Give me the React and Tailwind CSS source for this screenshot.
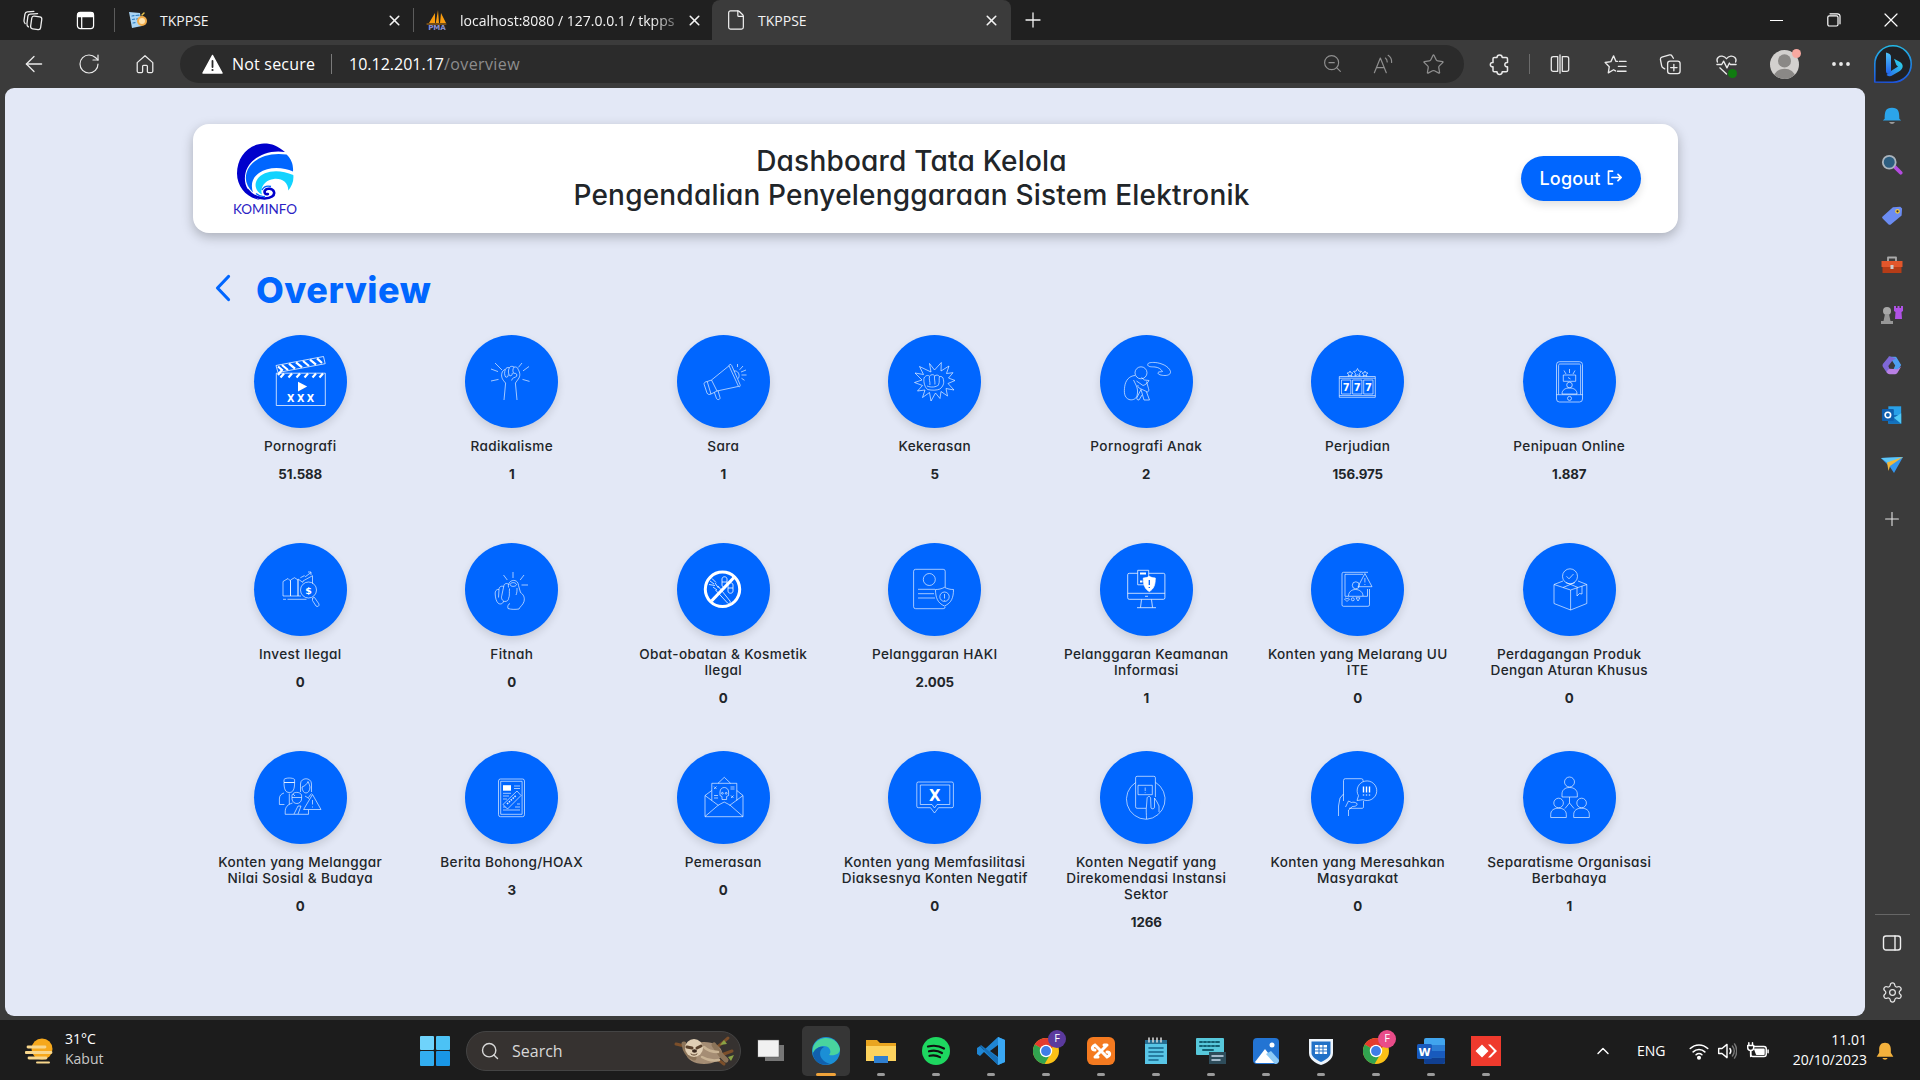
import React from "react";
import { ArrowLeft, RotateCw, Star, X, Plus, ZoomOut, Ellipsis, ChevronUp, Settings, Search, File } from "lucide-react";

const bold = "font-['DejaVu_Sans'] font-bold";

/* Category icons, each drawn in a 93x93 box, the size of its circle. */
const icons = {
  clapper: (
    <g strokeOpacity="1">
      <path d="M22.3 38.2h49v32.3h-49z" />
      <path d="M22 30.5 69.5 21.5l1.7 7.2L24 37.5z" />
      <path d="M28 30l6 5M35 28.6l6 5M42 27.3l6 5M49 26l6 5M56 24.7l6 5M63 23.4l5 4.6" strokeWidth="2.2" />
      <path d="M30 38.5l-3.5 4M38 38.5l-3.5 4M46 38.5l-3.5 4M54 38.5l-3.5 4M62 38.5l-3.5 4M69 38.5l-3.5 4M24 31.5l4 3.5-4 5" strokeWidth="2.2" />
      <path d="M44 46.8v9.600l9.200-4.800z" fill="#fff" stroke="none" />
      <text x="47.8" y="67" textAnchor="middle" fontSize="9.600" letterSpacing="2.4" fill="#fff" stroke="none" className={bold}>XXX</text>
    </g>
  ),
  fist: (
    <g>
      <path d="M30 28l7 7M26 34l7 2.6M26 46l7.5-1.6M57 28l-3.6 4.4M64 31.5l-6 4.4M57.5 44.4l7 2" />
      <path d="M40.6 48L39 65M50.4 48L52 65" />
      <path d="M40.6 48c-3-3-4.6-6-3.8-9.500.5-2.400 2-3.800 3.500-4 .8-1.800 2.600-2.400 4-1.800 1-1.600 3.400-1.800 4.700-.6 2-.6 4 .6 4.300 2.600 1.800 3 2.200 6.500 0 9.300-.9 1.500-2 2.700-2.900 4" />
      <path d="M40.300 34.500c-1 3-1 5.500.4 7.500 1.600.8 2.700-.7 2.500-2.500M44.300 32.700c-1.300 3-1.200 6 .4 8 2 .6 2.600-1 2.600-2.600M49 32.100c-1.500 2-1.300 4.500-.4 6.200 2.600-.4 3.800 1 3 3-1.600 1.600-4.500 1-5 4.200" />
    </g>
  ),
  megaphone: (
    <g>
      <path d="M34.500 45L52 30.800l9.500 20.600L40 56z" />
      <path d="M52 30.800c.3-1.800 2-1.900 2.700-.3l8.300 19c.6 1.800-.3 2.700-1.500 1.900M34.500 45l-4.300 1.500L34 59l6-3M30.200 46.500c-2 .2-3.600 1.300-3 3l2.800 8.500c.7 1.700 2.700 1.800 4 1M37.300 57.300l2.200 6.200c1 1.800 4 1.200 3.500-1l-2-6.800M57 36c3.600-.6 6.500 3 4.400 7.500" />
      <path d="M60.500 29v3M66 31l-3.400 3.800M69 35l-5 2M69.500 40h-5M67.500 45.300l-3-2" />
    </g>
  ),
  punch: (
    <g>
      <path d="M43 37l-1.500-8.500 5 6.500 6.800-7.500-.3 8.500 8-5-2.500 7.500 6.500-.8-4.500 5.300 6.500 2.500-7 3 6 6.500-8-1.500 1.500 7.500-6.500-4.500-1 7-4.500-5.500-4.500 8-1.500-8.500-7 5 2.500-7.500-7.500 1 5-5.500-8-3 7.500-2.500-7-7 8.500 1.500-4-8z" />
      <path d="M36 43c2-3 4-3 5.500-1.800 1.500-2 4-2 5.200-.4 1.600-1.200 4-.8 4.700.8 2-.6 4 .6 4 3 1 4-.5 7-3.500 9.400-3 1.500-8 1.400-12 .6-3-1.600-4.600-7.600-3.900-11.600zM41.500 41.500c-.8 3 .8 5 .4 8.500M46.700 41c-.8 3 .6 5 .2 8.500M51.400 41.700c-.6 3 .4 5-.8 7.800M39 51c4 1.600 9 1.500 12-1.500" />
    </g>
  ),
  child: (
    <g>
      <circle cx="41" cy="37.800" r="6" />
      <path d="M35 40.500c-6 .5-9.500 5-10.300 11-.7 5.500-.7 11 4.300 13 3 1 7-.3 8-3.500 1-4 .8-8-1.500-12l-2-4M36.500 46l6.500 4.500c2.500-.5 5-3 6-5l-4.500-.5-3-2.500M46.500 46.500l2 7c.8 2 0 3-1 3.500l-7.500-3.500c-2-1-2.500-2-2-3.500M41 54.500l3 10.500h5.500l-3-8M41 54.500l-4 8c-.6 1.800.5 2.600 2 2.500l3-5" />
      <path d="M47.700 29.500c0-2 4-2.200 7.500-2 3.500.3 6 1.200 9 2.500 2.500 1.200 5.800 4 6.300 6.500.4 2.500-2 4-5.500 4-3.500 0-7.500-1-7-2.800.7-1.500 3-.5 4.500-1.200-2-3-4-4-7.500-4.500-3-.3-7.300.3-7.300-2.500z" />
    </g>
  ),
  slot: (
    <g>
      <path d="M28.300 41.500h36v20.800h-36zM28.300 43.200h36M28.300 60.600h36M30.500 45h9.300v14h-9.300zM41.600 45h9.300v14h-9.300zM52.700 45h9.300v14h-9.300z" />
      <path d="M46.500 33.500l1.300 2.600 2.700.3-2 2 .6 2.600-2.600-1.300-2.600 1.300.6-2.600-2-2 2.700-.3zM39 36l.9 1.800 2 .2-1.500 1.400.5 1.800-1.900-.8-1.900.8.5-1.800-1.500-1.400 2-.2zM54 36l.9 1.800 2 .2-1.500 1.400.5 1.800-1.900-.8-1.900.8.5-1.800-1.500-1.400 2-.2z" />
      <g fontSize="10" fill="#fff" stroke="none" textAnchor="middle" className={bold}>
        <text x="35.200" y="55.800">7</text><text x="46.300" y="55.800">7</text><text x="57.400" y="55.800">7</text>
      </g>
    </g>
  ),
  phone: (
    <g>
      <rect x="33.500" y="26.700" width="26" height="40.300" rx="3" />
      <path d="M35.600 59.500V30.500c0-1 .5-1.500 1.500-1.500h19c1 0 1.500.5 1.500 1.500v29M33.500 59.700h26M40.300 40h12.400v6.300H40.300zM46.500 34v4M41 35.500l2 3.500M52 35.500l-2 3.500M39 59c0-4 3-6 7.500-6s7.500 2 7.500 6zM45 42.500l2.500 1.500" />
      <circle cx="46.500" cy="63.400" r="2" /><circle cx="46.500" cy="50" r="2.800" />
    </g>
  ),
  invest: (
    <g>
      <path d="M29 53V38.500l5-3 2.500 2.500v15M36.500 53V37l4-2.300 3.500 2.300v16M44 53V36l5 3.500M29 53h18M29 56.300h3M33.500 56.300h19M46.400 34.700l4-2 1 1L57 29.500M54 29h3v3M49 39v-1l9.500-5.300v8" />
      <circle cx="54.500" cy="47" r="8" />
      <path d="M58.500 55l2-.5 4.500 6.500c.6 2-1.600 3.300-3 2l-3.500-5.500z" />
      <text x="54.500" y="50.500" fontSize="9.500" textAnchor="middle" fill="#fff" stroke="none" className={bold}>$</text>
    </g>
  ),
  pointing: (
    <g>
      <path d="M48 29v6M38.500 32l3.800 5M59 32l-3.800 5M56.500 42H63" />
      <path d="M43.500 44.500c-1.500-8 9.500-10 10-2l2 7c3 2 4.500 5 3.500 9-1 3.500-4 5-5 7.500-4 .6-8 .5-11-.5-.8-2 .3-4.500 2-5M44.500 45.500c-.5 4 .5 7-1 10M45 41.500c1-2.500 5.500-2.500 6.500 0-.5 2.500-6 2.500-6.500 0zM52 45c0 2.500 0 5-1 7M43.800 41.500c-2.500-2-4.800-.6-5 1.500l-2 9.500M38.500 43.500c-2.500-1-4.500.5-4.500 3l-.5 8M34 46.500c-2.500-.5-4 1.500-3.800 4.500.2 4 1 7.500 3.300 9.500 2.500 1.300 5-.4 5-2.500M36.800 52.500c-1 3 .6 5.500 3 6 2.500 0 3.700-1.500 3.700-3" />
    </g>
  ),
  noDrugs: (
    <g strokeOpacity="1">
      <path d="M33 38l4 3M35 35.500l4 4M32 41.500l6 1M38 40l3.500 5M36 44l4 3M41 43l12 15c1 2-1 3.500-2.500 2l-12-13M45 36c0-3 5-3 5 0v6c0 3-5 3-5 0zM51 42c0-3 5-3 5 0v6c0 3-5 3-5 0zM45 39h5M51 45h5" strokeWidth=".8" />
      <circle cx="45.500" cy="46.300" r="17.200" strokeWidth="3" />
      <path d="M34.500 58L57 34.500" strokeWidth="3.200" />
    </g>
  ),
  haki: (
    <g>
      <path d="M50 65.700H27.600a2 2 0 0 1-2-2V28.300a2 2 0 0 1 2-2h27.600a2 2 0 0 1 2 2v16M50 65.700h5.200a2 2 0 0 0 2-2" />
      <circle cx="41.300" cy="36.500" r="6" />
      <path d="M30 46.300h17M30 50.700h16M30 55h17M56.500 44.300c3 1.700 6 2.200 9 2.200 0 8-2 13.500-9 16.500-7-3-9-8.500-9-16.500 3 0 6-.5 9-2.200zM56.500 51v4.500M56.500 57v.8" />
      <circle cx="56.500" cy="53.700" r="4.700" />
    </g>
  ),
  monitor: (
    <g strokeOpacity="1">
      <rect x="27.700" y="30.300" width="37.200" height="26" rx="1.500" />
      <path d="M27.700 50.300h37.200M41.500 56.500l-1 8M51.500 56.500l1 8M37 64.700h19M45 53.300h3" />
      <path d="M37.700 27.300h11v14.500h-11z" fill="#06f" />
      <path d="M40 30.500h6M40 38.500h2.500" strokeWidth="2" />
      <path d="M49.300 33.300c2 1.300 4 1.700 6 1.700 0 7-1.500 10.800-6 13.600-4.500-2.800-6-6.600-6-13.600 2 0 4-.4 6-1.700z" fill="#fff" />
      <path d="M49.300 37v5M49.300 44v1" stroke="#06f" strokeWidth="1.300" />
    </g>
  ),
  ite: (
    <g>
      <path d="M58.500 46v15.800a1.500 1.500 0 0 1-1.500 1.500H32.500a1.500 1.500 0 0 1-1.500-1.500v-31a1.500 1.500 0 0 1 1.500-1.500H57M56.500 46v7.300H34V31.300h18M37.500 53c0-4 3-6.500 7-6.500s7.500 2.500 7.500 6.500" />
      <circle cx="44.800" cy="42.300" r="3.500" />
      <path d="M53.900 30.500L61 43.700H47zM53.900 35v4.500M53.900 41v1" />
      <path d="M36 58.500l-2.500-2.500 1.300-1 1.200 1 1.200-1 1.300 1zM45 54.800h4l-2 3.200z" /><circle cx="41.800" cy="56.300" r="1.500" />
    </g>
  ),
  box: (
    <g>
      <circle cx="47" cy="33.300" r="7.500" /><path d="M43.500 33.300l2.500 2.500 4.500-4.800" />
      <path d="M31 41.500v19l16.600 6.500 16.200-6.500v-19L47.600 47zM47.600 47v20M31 41.500l9-3.500M63.800 41.500L55 38M40 44.500l12-5M55 44.500l-12-5M54 45v8l2.500-2.500L59 51v-8" />
    </g>
  ),
  family: (
    <g>
      <path d="M30 31.500c0 7 1.600 10 5.300 10s5.300-3 5.300-10zM30 31.500v-3c1.500-2 9-2 10.600 0v3M30 31.500h10.600M46.500 41v-8c0-7 11-7 11 0v8M48 36c3-1 5-3 6-5.500 1 2 1.500 3.500 2 5.500-.3 8-7.700 8-8 0zM30 42c-3 1-4.600 2.500-4.600 6v5.500h5M35.300 42.500v11M39 43l2 2M57.500 42.500l-3 4" />
      <path d="M38 44c1.500-3.500 8-3.500 9.600 0v4c-.5 6-9 6-9.600 0zM38 46.500h9.600M38.500 52c-5 1.500-7.300 4-7.300 9v2.300h23.300V59M40 63l4-8 3 0-3 8M51 45l4 2.500" />
      <path d="M58.500 43.500L67 58.500H49.600zM58.500 49v4.500M58.500 55.500v1" />
    </g>
  ),
  hoax: (
    <g>
      <rect x="33.500" y="28" width="26" height="37.700" rx="2" /><path d="M35.700 30.300h21.400v33H35.700z" />
      <path d="M38 34.200h8v5.500h-8z" fill="#fff" stroke="none" />
      <path d="M49 35h6M49 37.500h6M38 42.300h8M38 45h6M38 48h4M38 56h4M38 59h17M50 56h5M52 53h3" />
      <path d="M38 53.500L52 40l4 4.500L42.500 58z" fill="#06f" /><path d="M42 53l9-8.600" strokeWidth="1.600" strokeDasharray="1.600 1" />
    </g>
  ),
  envelope: (
    <g>
      <path d="M28 44.500v21.200h38V44.500M28 44.500l13.500 10M66 44.500l-13.500 10M28 65.500L41.500 54l5.700-3 5.700 3L66 65.500M34.800 49.500V32.300h25v17.200M41 32.300l6.300-6 6.300 6M28 44.500l6.800-5M66 44.500l-6.200-5" />
      <path d="M43 41c0-6 8.600-6 8.600 0v3.500l-2 1v3h-4.600v-3l-2-1zM37 35.500l2.500 2.500M39.500 35.500L37 38M53.500 36h4M53.500 38h4M37 44.500h4M37 47h4M54 44.500l2.500 2.500M56.500 44.500L54 47" />
      <circle cx="45.400" cy="42.300" r=".9" /><circle cx="49.200" cy="42.300" r=".9" />
    </g>
  ),
  blocked: (
    <g>
      <path d="M30.300 31h33.600a1.500 1.500 0 0 1 1.500 1.500v22.700a1.500 1.500 0 0 1-1.500 1.500H50.500L46.500 62l-4-5.300H30.300a1.500 1.500 0 0 1-1.500-1.500V32.500a1.500 1.500 0 0 1 1.500-1.500z" />
      <path d="M32.300 34h29.500v19.500H49L46.500 57 44 53.500H32.300z" />
      <text x="46.700" y="49.700" fontSize="15" textAnchor="middle" fill="#fff" stroke="none" className={bold}>X</text>
    </g>
  ),
  sector: (
    <g>
      <path d="M35.600 31.500a20 20 0 0 0 10.900 36.800 20 20 0 0 0 9-37" />
      <path d="M46 57.300h-8.900a1.500 1.500 0 0 1-1.500-1.500v-29a1.500 1.500 0 0 1 1.500-1.500h16.800a1.500 1.500 0 0 1 1.500 1.500V46M38 34.300h14.300v9.400H38zM45.200 36.500v3.500M45.200 41.300v.8" />
      <path d="M46.500 68c0-5-.6-9 0-13l.6-8c.5-2 3.300-2 3.500 0l.4 10c1 1.500 3.500 1 3.500-1V47l2.500 4 2 4v6" />
    </g>
  ),
  unrest: (
    <g>
      <path d="M38 57.300h13c1 0 1.500-.5 1.500-1.500v-6M32.500 50V29.500a1.800 1.800 0 0 1 1.800-1.800h16a1.800 1.800 0 0 1 1.800 1.800v1" />
      <path d="M46 49.500l1.500-4.800a9.800 9.800 0 1 1 4.500 4z" /><path d="M52.500 35.500v6M52.500 43.500v1M55.500 35.500v6M55.500 43.500v1M58.500 35.500v6M58.500 43.500v1" strokeWidth="1.400" strokeOpacity="1" />
      <path d="M27.500 65V55l1.500-8 3.500-4M37.500 65v-6l4-3.500c3 0 5-1 4.500-3-2-1.500-4-1.500-5.500-1l-3-1.500-3 6" />
    </g>
  ),
  group: (
    <g>
      <circle cx="46.500" cy="31" r="5" /><circle cx="35.600" cy="52" r="4.800" /><circle cx="58.600" cy="52" r="4.800" />
      <path d="M39 46v-3c0-4 3-6.500 7.500-6.500s7.800 2.500 7.800 6.500v3zM27.700 66.500v-3c0-4 3-6.300 7.800-6.300s7.800 2.300 7.800 6.300v3zM50.700 66.500v-3c0-4 3-6.300 7.800-6.300s7.800 2.300 7.800 6.300v3zM46.500 46v6l-4.500 5.500M46.500 52l4.500 5.500" />
    </g>
  ),
};

const categories = [
  ["clapper", ["Pornografi"], "51.588"],
  ["fist", ["Radikalisme"], "1"],
  ["megaphone", ["Sara"], "1"],
  ["punch", ["Kekerasan"], "5"],
  ["child", ["Pornografi Anak"], "2"],
  ["slot", ["Perjudian"], "156.975"],
  ["phone", ["Penipuan Online"], "1.887"],
  ["invest", ["Invest Ilegal"], "0"],
  ["pointing", ["Fitnah"], "0"],
  ["noDrugs", ["Obat-obatan & Kosmetik", "Ilegal"], "0"],
  ["haki", ["Pelanggaran HAKI"], "2.005"],
  ["monitor", ["Pelanggaran Keamanan", "Informasi"], "1"],
  ["ite", ["Konten yang Melarang UU", "ITE"], "0"],
  ["box", ["Perdagangan Produk", "Dengan Aturan Khusus"], "0"],
  ["family", ["Konten yang Melanggar", "Nilai Sosial & Budaya"], "0"],
  ["hoax", ["Berita Bohong/HOAX"], "3"],
  ["envelope", ["Pemerasan"], "0"],
  ["blocked", ["Konten yang Memfasilitasi", "Diaksesnya Konten Negatif"], "0"],
  ["sector", ["Konten Negatif yang", "Direkomendasi Instansi", "Sektor"], "1266"],
  ["unrest", ["Konten yang Meresahkan", "Masyarakat"], "0"],
  ["group", ["Separatisme Organisasi", "Berbahaya"], "1"],
];

/* ---------- browser chrome ---------- */

function Svg({ size = 22, box = 24, children, ...rest }) {
  return (
    <svg width={size} height={size} viewBox={`0 0 ${box} ${box}`} fill="none" strokeLinecap="round" strokeLinejoin="round" {...rest}>
      {children}
    </svg>
  );
}

const Close = ({ size = 17 }) => <X size={size} strokeWidth={1.6} absoluteStrokeWidth className="shrink-0" />;

function TabStrip() {
  return (
    <div className="flex h-10 items-center bg-[#202020] text-[14px] text-[#f3f3f3]">
      <div className="flex w-[65px] justify-center">
        <Svg size={22} stroke="#eee" strokeWidth="1.4">
          <rect x="10" y="8" width="11" height="14" rx="2.500" transform="rotate(8 15 15)" />
          <path d="M7 19.500c-1.500-1-1.800-2-1.600-3.500l1-8c.2-1.500 1-2.200 2.500-2.300L17 5M3.500 16C2.300 15 2 14 2.200 12.500l1-7C3.500 4 4.300 3.300 5.800 3.100L13 2.500" />
        </Svg>
      </div>
      <div className="flex w-[49px] justify-start pl-[11px]">
        <Svg size={19} box={20} stroke="#fff" strokeWidth="1.300">
          <rect x="1.500" y="1.500" width="17" height="17" rx="3" /><path d="M2 3.500c0-1 .7-1.700 1.700-1.700h12.600c1 0 1.700.7 1.700 1.700V6H2z" fill="#fff" /><path d="M6 6v12" />
        </Svg>
      </div>
      <div className="h-6 w-px bg-[#5c5c5c]" />
      <div className="flex w-[298px] items-center pl-[13px]">
        <Svg size={20} box={20}>
          <path d="M1 2l11 1 2 13-10 2z" fill="#a9d5f5" /><path d="M4 6l2-.3M4.500 9.500l2-.3M5 13l2-.3M8 5.500l3-.3M8.500 9l2-.3" stroke="#2f7fc1" strokeWidth="1.200" />
          <circle cx="14" cy="11" r="5" fill="#f2ac4a" /><circle cx="14" cy="11" r="3" fill="#ffe2ad" /><path d="M14 5l2-2" stroke="#e8c34a" strokeWidth="1.500" />
        </Svg>
        <span className="ml-3 flex-1">TKPPSE</span>
        <span className="mr-[10px]"><Close /></span>
      </div>
      <div className="h-6 w-px bg-[#5c5c5c]" />
      <div className="flex w-[298px] items-center pl-[12px]">
        <Svg size={22} box={22}>
          <path d="M3 14L9 4v10zM9.800 14L12 1l1 13zM14 14l1-10 5 10z" fill="#f89c0e" /><path d="M1 15h19" stroke="#c77a10" />
          <text x="11" y="21" fontSize="7" textAnchor="middle" fill="#8c93d6" className={bold}>PMA</text>
        </Svg>
        <span className="ml-3 w-[218px] whitespace-nowrap [mask-image:linear-gradient(to_right,#000_88%,rgba(0,0,0,0.3)_100%)]">localhost:8080 / 127.0.0.1 / tkpps</span>
        <span className="ml-[8px]"><Close /></span>
      </div>
      <div className="flex h-10 w-[299px] items-center rounded-t-[8px] bg-[#3b3b3b] pl-[13px]">
        <File size={22} strokeWidth={1.300} />
        <span className="ml-[11px] flex-1">TKPPSE</span>
        <span className="mr-[11px]"><Close /></span>
      </div>
      <div className="flex w-11 justify-center"><Plus size={24} strokeWidth={1.300} /></div>
      <div className="ml-auto flex pr-px">
        <div className="flex w-[58px] items-center justify-center"><div className="h-px w-[13px] bg-white" /></div>
        <div className="flex w-[57px] items-center justify-center">
          <Svg size={14} box={14} stroke="#fff" strokeWidth="1.200"><rect x=".8" y="2.800" width="10.200" height="10.200" rx="1.500" /><path d="M3 .8h7.500A2.500 2.500 0 0 1 13 3.300v7.500" /></Svg>
        </div>
        <div className="flex w-[57px] items-center justify-center"><Svg size={14} box={14} stroke="#fff" strokeWidth="1.200"><path d="M1 1l12 12M13 1L1 13" /></Svg></div>
      </div>
    </div>
  );
}

function Toolbar() {
  const cell = "flex w-[55.5px] shrink-0 items-center justify-center";
  return (
    <div className="flex h-12 items-center pl-[6px] text-[#eaeaea]">
      <div className={cell}><ArrowLeft size={26} strokeWidth={1.200} /></div>
      <div className={cell}><RotateCw size={24} strokeWidth={1.200} /></div>
      <div className={cell}>
        <Svg size={22} stroke="#eaeaea" strokeWidth="1.400"><path d="M3.500 10.500L12 3l8.500 7.500V20c0 .8-.5 1.300-1.300 1.300h-3.400c-.7 0-1.200-.5-1.200-1.200v-5.600c0-.6-.4-1-1-1h-3.200c-.6 0-1 .4-1 1v5.600c0 .7-.5 1.200-1.200 1.200H4.800c-.8 0-1.300-.5-1.300-1.300z" /></Svg>
      </div>
      <div className="ml-[7.5px] flex h-[38px] w-[1284px] shrink-0 items-center rounded-full bg-[#2b2b2b] pl-[22px] text-[16px] text-white">
        <Svg size={21} box={21}><path d="M10.500 1.500L20 19H1z" fill="#fff" stroke="#fff" strokeWidth="1.500" /><path d="M10.500 7v6" stroke="#2b2b2b" strokeWidth="1.800" /><circle cx="10.500" cy="16" r="1.100" fill="#2b2b2b" /></Svg>
        <span className="ml-[9px] w-[84px] whitespace-nowrap tracking-[0.2px]">Not secure</span>
        <div className="mx-[15px] h-5 w-px bg-[#7a7a7a]" />
        <span className="ml-[2px]">10.12.201.17<span className="tracking-[0.4px] text-[#8d8d8d]">/overview</span></span>
        <div className="ml-auto flex pr-[7px] text-[#8f8f8f]">
          <div className="flex w-[51px] justify-center"><ZoomOut size={21} strokeWidth={1.300} /></div>
          <div className="flex w-[51px] justify-center">
            <Svg size={22} stroke="currentColor" strokeWidth="1.300"><path d="M1.500 21.500L8 5.500l6.500 16M4 16h8M13.500 5.500c1.300 1 2 2.500 2 4.300M16.500 2.500c2.500 1.500 4 4.500 3.800 7.800" /></Svg>
          </div>
          <div className="flex w-[48px] justify-center"><Star size={23} strokeWidth={1.300} /></div>
        </div>
      </div>
      <div className="ml-[7px] flex w-[58px] shrink-0 justify-center">
        <Svg size={24} stroke="#eaeaea" strokeWidth="1.500"><path d="M9 5.500a2.600 2.600 0 0 1 5.200 0h4c.8 0 1.300.5 1.300 1.300v3.700a2.200 2.200 0 1 0 0 4.300v3.700c0 .8-.5 1.300-1.300 1.300h-4a2.600 2.600 0 0 1-5.200 0H6.300c-.8 0-1.300-.5-1.300-1.300v-3.700a2.200 2.200 0 1 1 0-4.300V6.800c0-.8.5-1.300 1.300-1.300z" /></Svg>
      </div>
      <div className="h-5 w-px shrink-0 bg-[#6b6b6b]" />
      <div className={cell + " ml-[2px]"}>
        <Svg size={22} stroke="#eaeaea" strokeWidth="1.400"><path d="M9.500 4H4.800C3.500 4 2.500 4.800 2.500 6v12c0 1.200 1 2 2.300 2h4.700zM14.500 4h4.700c1.300 0 2.300.8 2.300 2v12c0 1.200-1 2-2.300 2h-4.700zM12 2v20" /></Svg>
      </div>
      <div className={cell}>
        <Svg size={23} stroke="#eaeaea" strokeWidth="1.400"><path d="M14 8.800h-1.500L10 3 7.200 9l-6 .9 4.300 4.400-1 6.500L10 17.500l2 1.200M16 8.800h7M15 14h8M14 19h9" /></Svg>
      </div>
      <div className={cell}>
        <Svg size={23} stroke="#eaeaea" strokeWidth="1.400"><rect x="9" y="8.500" width="13" height="13" rx="2.500" /><path d="M15.500 12v6.500M12.200 15.200h6.600M6 16.500l-1.700-.9c-1-.5-1.300-1.200-1.500-2.200L1.500 6.800c-.2-1.300.3-2 1.500-2.400L11 2c1.200-.3 2 0 2.500 1L15 5.500" /></Svg>
      </div>
      <div className={cell}>
        <div className="relative">
          <Svg size={23} stroke="#eaeaea" strokeWidth="1.400"><path d="M2.500 9.500C.8 5 4.500 3 7.500 3.300 9.500 3.500 11 4.500 12 6c1-1.500 2.500-2.500 4.500-2.700 3-.3 6.700 2.200 5 6.200M2 12h5l2-3.500 3.500 7 2.500-5 1 1.500h6M5 15.500l7 6.500" /></Svg>
          <span className="absolute -bottom-[2px] right-[1px] size-[9px] rounded-full bg-[#107c10]" />
        </div>
      </div>
      <div className="flex w-[60px] shrink-0 justify-center">
        <div className="relative">
          <Svg size={29} box={28}><clipPath id="avatar"><circle cx="14" cy="14" r="14" /></clipPath><g clipPath="url(#avatar)"><path d="M0 0h28v28H0z" fill="#d2d0ce" /><circle cx="14" cy="10.500" r="6.300" fill="#8a8886" /><ellipse cx="14" cy="25.500" rx="10" ry="7.500" fill="#8a8886" /></g></Svg>
          <span className="absolute -right-[2px] -top-[1px] size-[9px] rounded-full bg-[#f7a8a0]" />
        </div>
      </div>
      <div className="flex w-[54px] shrink-0 justify-center"><Ellipsis size={24} strokeWidth={1.800} /></div>
      <div className="ml-[5px] flex w-[40px] shrink-0 justify-center">
        <Svg size={40} box={40}>
          <defs>
            <linearGradient id="bingRing" x1="0" y1="0" x2="0" y2="1"><stop offset="0" stopColor="#23b8e6" /><stop offset="1" stopColor="#1c55e0" /></linearGradient>
            <linearGradient id="bingB" x1="0" y1="0" x2="0" y2="1"><stop offset="0" stopColor="#4fc3f7" /><stop offset="1" stopColor="#1f63ee" /></linearGradient>
            <linearGradient id="bingC" x1="1" y1="0" x2="0" y2="1"><stop offset="0" stopColor="#2fdfe4" /><stop offset="1" stopColor="#2667ee" /></linearGradient>
          </defs>
          <path d="M1.800 38V20A18.200 18.200 0 1 1 20 38.200z" fill="#202124" stroke="url(#bingRing)" strokeWidth="1.600" />
          <path d="M13.500 31c2 1.500 4 1.500 6 .3l6.500-3.800c4.500-2.500 5-7 1-9.500l-6-3.200 2.300 6.200 1.700 1.500-7 4.500z" fill="url(#bingC)" />
          <path d="M13 8.500c3 .8 5 2 5 4.500V27c0 3.500-5 4-5 0z" fill="url(#bingB)" />
        </Svg>
      </div>
    </div>
  );
}

const sideIcons = [
  <Svg><path d="M4 16c0-8 1-12 8-12s8 4 8 12l2 2H2z" fill="#2ba4ea" /><path d="M9 20h6c0 2-6 2-6 0z" fill="#bbb" /></Svg>,
  <Svg><path d="M15 14l6.500 6.500" stroke="#b44be0" strokeWidth="4" /><circle cx="9" cy="9" r="7" fill="#2d5e80" stroke="#aab4bd" strokeWidth="2" /></Svg>,
  <Svg><path d="M1.500 14L13 3.500l8-.5 2 2-.5 7.500L11 22c-1 1-2 1-3 0l-6-6c-.8-.8-1-1.300-.5-2z" fill="#6b8cf2" /><circle cx="18" cy="8" r="2.500" fill="#f3c73c" /><circle cx="18" cy="8" r="1.200" fill="#333" /></Svg>,
  <Svg size={24}><path d="M8 8V4.500h8V8" stroke="#aaa" strokeWidth="1.800" /><path d="M1.500 8h21v6h-21z" fill="#e2562b" /><path d="M2.500 14h19v6h-19z" fill="#b53c17" /><path d="M10.500 12h3v4h-3z" fill="#ccc" /></Svg>,
  <Svg size={24}><path d="M14 3h2v2h1.500V3h2v2H21V3h2v5l-1.500 1 .5 7h-7l.5-7-1.500-1z" fill="#b052e6" /><circle cx="7" cy="8" r="4" fill="#a8a8a8" /><path d="M5 11h4l1.500 7H13v3H1v-3h2.500z" fill="#979797" /></Svg>,
  <Svg><path d="M8 3h7c1 0 2 .5 2.500 1.500L22 12l-3 5-6 1 2.500-5.500L12 7z" fill="#4e9ff0" /><path d="M9 2.500L2 11c-.5 1-.5 2 0 3l4 6 5 1-3-8 4.500-6 4-2z" fill="#7f68d8" /><path d="M6 20c1 1.500 2 2 3.500 2h6c1 0 2-.5 2.500-1.500l4-7-4 3-9-.5-2 2z" fill="#b980e4" /></Svg>,
  <Svg><path d="M8 2.500h14v19H8z" fill="#28a0e8" /><path d="M8 12h14v9.500H8z" fill="#1270bd" /><path d="M14 15l8-5v11.500z" fill="#50c8f4" /><rect x="1" y="5.500" width="13" height="13" rx="1" fill="#0f5fae" /><circle cx="7.500" cy="12" r="3" stroke="#fff" strokeWidth="1.800" /></Svg>,
  <Svg size={24}><path d="M1 5l22-1-9 16-4-6z" fill="#3396ef" /><path d="M1 5l22-1-14 7z" fill="#5ec7f7" /><path d="M7 9.500L23 4 10 13l-1.500 5z" fill="#f1b83a" /></Svg>,
];

function Sidebar() {
  return (
    <div className="flex w-[54px] flex-col items-center pt-[2px] text-[#e4e4e4]">
      {sideIcons.map((icon, i) => <div key={i} className="flex h-[50px] items-center">{icon}</div>)}
      <div className="flex h-[58px] items-center"><Plus size={22} strokeWidth={1.200} /></div>
      <div className="mt-auto h-px w-[35px] bg-[#666]" />
      <div className="flex h-[55px] items-center">
        <Svg size={20} box={20} stroke="#eee" strokeWidth="1.400"><rect x="1.500" y="3" width="17" height="14" rx="2.500" /><path d="M13 3v14" /></Svg>
      </div>
      <div className="mb-[1px] flex h-[45px] items-center"><Settings size={23} strokeWidth={1.300} /></div>
    </div>
  );
}

/* ---------- dashboard ---------- */

function Logo() {
  return (
    <svg width="66" height="74" viewBox="0 0 66 74" className="shrink-0">
      <path d="M53 10C46 4 40 1.500 32 1.500 16 2 5 15 5 31.500 5 45 15 56 28 58 16 52 11 42 13.500 31 17 17 34 7 53 10z" fill="#0000cc" />
      <path d="M54.500 12.500C59.500 17 61.500 23 61 29.500 51 25 36 24.500 27 31c-7 5-8.500 12-6 19.500-6-6-8.500-12-6.500-19.500C18 18 35 9.500 54.500 12.500z" fill="#06f" />
      <path d="M61.300 33c.7 6-1.500 11-5 15.500 0-8-6.500-12.500-14.500-11.500-7 1-11.500 5-12.300 11-.2 2 0 3 .5 4.500-6-3-8.500-9.500-4.500-15.500C31 28.500 47 26.500 61.300 33z" fill="#12d3ff" />
      <path d="M15.500 48c4.500 6 10.500 8.500 17 8.500 6.500-.2 10.500-3 9.500-6.500-1-3.500-7-4.500-9-1.500-1.300 2.200.5 4.300 2.800 3.500" fill="none" stroke="#0000cc" strokeWidth="2.600" strokeLinecap="round" />
      <path d="M24 51.500c3 2.500 6 3.500 9 3M30 48c1.500-3 5-4.500 9-3.500" fill="none" stroke="#06f" strokeWidth="1.300" />
      <text x="33" y="71.500" fontSize="14" textLength="64" lengthAdjust="spacingAndGlyphs" textAnchor="middle" fill="#2a22c4" className="font-['Lato']">KOMINFO</text>
    </svg>
  );
}

function Dashboard() {
  return (
    <main className="ml-[5px] h-[928px] w-[1860px] rounded-[9px] bg-[#e3e8f6] pl-[188px] pt-9 font-['Inter',sans-serif] text-[#212529] [font-feature-settings:'cv11']">
      <header className="flex h-[109px] w-[1485px] items-center rounded-2xl bg-white pl-[39px] pr-[37px] shadow-[0_4px_12px_rgba(0,0,0,0.25)]">
        <Logo />
        <h1 className="flex-1 pl-1 text-center text-[28px]/[33.6px] font-medium tracking-[0.2px]">
          Dashboard Tata Kelola<br />Pengendalian Penyelenggaraan Sistem Elektronik
        </h1>
        <button className="flex h-[45px] w-[120px] items-center justify-center gap-[7px] rounded-full bg-[#06f] text-[18px] font-medium tracking-[0.15px] text-white shadow-[0_4px_8px_rgba(0,0,0,0.12)]">
          Logout
          <Svg size={15} box={15} stroke="#fff" strokeWidth="1.700" className="mb-0.5"><path d="M5.500 1.200H1.500v12.600h4M5 7.500h9M11 4.300l3.200 3.200L11 10.700" /></Svg>
        </button>
      </header>
      <div className="mt-[35px] flex h-11 items-center pl-[22px]">
        <Svg size={28} box={28} stroke="#06f" strokeWidth="3.200" className="mb-1 w-4" viewBox="0 0 16 28"><path d="M13.500 2.500L2.500 14l11 11.500" /></Svg>
        <h2 className="ml-[25px] text-[36px]/[44px] font-extrabold tracking-[0.5px] text-[#06f]">Overview</h2>
      </div>
      <section className="ml-[1.500px] mt-[23px] grid w-[1480.5px] grid-cols-7">
        {categories.map(([icon, lines, count]) => (
          <div key={icon} className="h-[208px] text-center text-[13.6px]/[16px]">
            <div className="mx-auto size-[93px] rounded-full bg-[#06f] shadow-[0_4px_8px_rgba(0,0,0,0.12)]">
              <svg viewBox="0 0 93 93" fill="none" stroke="#fff" strokeOpacity=".85" strokeWidth=".75">{icons[icon]}</svg>
            </div>
            <p className="mt-[10px] font-medium tracking-[0.35px]">
              {lines.map((line) => <span key={line} className="block whitespace-nowrap">{line}</span>)}
            </p>
            <p className="mt-[11.500px] text-[13.3px]/[16px] font-bold tracking-[-0.1px]">{count}</p>
          </div>
        ))}
      </section>
    </main>
  );
}

/* ---------- taskbar ---------- */

const chromeLogo = (
  <>
    <circle cx="15" cy="15" r="13" fill="#fbc116" /><path d="M15 15L3.700 8.500a13 13 0 0 1 22.600 0z" fill="#e33b2e" /><path d="M15 15L3.700 8.500A13 13 0 0 0 13.500 28l6-10z" fill="#31a350" />
    <circle cx="15" cy="15" r="6.200" fill="#fff" /><circle cx="15" cy="15" r="4.900" fill="#3f7de8" />
  </>
);

const tasks = [
  { icon: <><path d="M9 9h19v16H9z" fill="#767676" /><path d="M2 4h21v17H2z" fill="#f1f1f1" stroke="#555" strokeWidth=".5" /></>, idle: true },
  { icon: <><circle cx="15" cy="15" r="14" fill="#1b8fd6" /><path d="M3 9C8-1 26-1 29 13c0 5-5 7-11 6 3-3 1-9-5-9C9 10 5 12 2 17c-.8-3 0-6 1-8z" fill="#49d49e" /><path d="M2 17c3-6 8-7 11-6-6 3-6 13 6 17C10 31 2 25 2 17z" fill="#1160ad" /></>, active: true },
  { icon: <><path d="M0 4h11l3 3h16v18H0z" fill="#e9a520" /><path d="M0 10h30v15H0z" fill="#fdd35e" /><path d="M8 20h14v7H8z" fill="#2f7fd0" /></> },
  { icon: <><circle cx="15" cy="15" r="14" fill="#1ed760" /><path d="M7 10.500c6-1.500 11-1 16 2M8 15.300c5-1.300 9-.8 13 1.700M8.500 19.800c4-1 7-.7 10.500 1.300" stroke="#111" strokeWidth="2.200" /></> },
  { icon: <><path d="M22 1l7 3v22l-7 3L8 16l-4 4-3-2v-6l3-2 4 4z" fill="#1f86d4" /><path d="M4 10l4 4L22 29V22L5 9z" fill="#1670b8" /><path d="M22 9v12l-8-6z" fill="#1c1c1c" /><path d="M22 1l7 3v22l-7 3z" fill="#3aa8f4" /></> },
  { icon: chromeLogo, badge: "bg-[#5b3a9e] text-white" },
  { icon: <><rect x="1" y="1" width="28" height="28" rx="6" fill="#f47a20" /><path d="M9 9l6 6M15 15l-6 6M21 9l-6 6 6 6M9 9c-4 2-3 5 0 5M21 21c4-2 3-5 0-5M9 21h3M18 9h3" stroke="#fff" strokeWidth="3" /></> },
  { icon: <><path d="M4 4h22v24H4z" fill="#58c5e6" /><path d="M4 4h22v4H4z" fill="#256d92" /><path d="M8 2v4M12 2v4M16 2v4M20 2v4" stroke="#ddd" strokeWidth="1.500" /><path d="M8 12h14M8 16h14M8 20h14M8 24h9" stroke="#17648a" strokeWidth="1.600" /></> },
  { icon: <><rect x="0" y="2" width="28" height="17" rx="1" fill="#57c8db" /><path d="M4 6h2M8 6h2M12 6h2M16 6h2M20 6h3M4 10h2M8 10h2M12 10h2M16 10h2M20 10h3M7 14h10" stroke="#135e70" strokeWidth="2" /><path d="M13 16h17v12H13z" fill="#2e4c5a" /><path d="M16 20h11M16 24h8" stroke="#cde" strokeWidth="1.500" /></> },
  { icon: <><rect x="2" y="2" width="26" height="26" rx="4" fill="#2374d3" /><path d="M4 26L14 13l11 14H6c-1 0-2-.5-2-1z" fill="#fff" /><path d="M15 18l5-3 8 9c0 2-1 4-4 4z" fill="#8dcaf6" /><circle cx="21" cy="9" r="2.500" fill="#fff" /></> },
  { icon: <><path d="M3 3h24v14c0 6-6 10-12 12C9 27 3 23 3 17z" fill="#eef5fc" /><path d="M5.500 5.500h19v11.500c0 4-5 7-9.500 9-4.500-2-9.500-5-9.500-9z" fill="#2171c7" /><path d="M9 9h12v9H9z" fill="#fff" /><path d="M9 12h12M9 15h12M13 9v9M17 9v9" stroke="#2171c7" /></> },
  { icon: chromeLogo, badge: "bg-[#e94c89] text-white" },
  { icon: <><rect x="8" y="2" width="21" height="26" rx="2" fill="#41a5ee" /><path d="M8 9h21v6.500H8z" fill="#2b7cd3" /><path d="M8 15h21v6.500H8z" fill="#185abd" /><path d="M8 21.500h21V26a2 2 0 0 1-2 2H10a2 2 0 0 1-2-2z" fill="#103f91" /><rect x="1" y="8" width="15" height="15" rx="1.500" fill="#185abd" /><text x="8.500" y="19.500" fontSize="11" textAnchor="middle" fill="#fff" className={bold}>W</text></> },
  { icon: <><path d="M0 0h30v30H0z" fill="#ef3a2d" /><path d="M11 8.500l6.500 6.500L11 21.500 4.500 15zM17 8.500h2.500L26 15l-6.500 6.500H17l6-6.500z" fill="#fff" /></> },
];

function Sloth() {
  return (
    <svg width="62" height="36" viewBox="0 0 62 36" fill="none" strokeLinecap="round" className="ml-auto">
      <path d="M2 11c12 3 32 7 48 20M34 20c8-5 14-9 20-15M42 24l16-6" stroke="#7c4f2a" strokeWidth="3" />
      <path d="M46 12l4-5 3 4zM54 24l6-2-3 6z" fill="#8aa345" />
      <ellipse cx="30" cy="20" rx="18" ry="11" fill="#a58d74" /><path d="M10 11c1 8 5 12 10 14M40 12c4 5 5 9 12 15" stroke="#8c7459" strokeWidth="5" />
      <path d="M30 14c4 4 8 5 14 5M28 24c5 3 12 4 17 3" stroke="#c9b394" strokeWidth="2.500" />
      <circle cx="20" cy="15" r="9" fill="#e1cfb4" /><path d="M13 14l5 1M27 13l-4 2" stroke="#5b422c" strokeWidth="3" /><ellipse cx="20.500" cy="18" rx="2.500" ry="1.800" fill="#3c2b20" /><path d="M17 21c2 1.500 4 1.500 6 0" stroke="#5b422c" />
    </svg>
  );
}

function Taskbar() {
  return (
    <footer className="mt-1 flex h-[60px] items-center bg-[#1c1c1c] pt-px text-[14px] text-white">
      <div className="flex w-[420px] items-center pl-[25px]">
        <Svg size={30} box={30}>
          <circle cx="17" cy="13" r="10.500" fill="#f6a81c" /><path d="M3 11h17M1 16.500h25M4 22h17" stroke="#f8d68c" strokeWidth="2.800" /><path d="M12 26.500h12" stroke="#f8d68c" strokeWidth="2" />
        </Svg>
        <div className="-mt-[3px] ml-[10px] leading-[20px]"><p>31°C</p><p className="text-[#c8c8c8]">Kabut</p></div>
      </div>
      <div className="grid size-[30px] grid-cols-2 gap-[1.5px]">
        <span className="rounded-[1px] bg-[#6fd3fb]" /><span className="rounded-[1px] bg-[#4cc2f5]" /><span className="rounded-[1px] bg-[#33aef0]" /><span className="rounded-[1px] bg-[#1996e6]" />
      </div>
      <div className="ml-[16px] flex h-10 w-[275px] items-center rounded-full border border-[#444] bg-[#363230] pl-[13px] pr-1 text-[16px] text-[#d8d8d8]">
        <Search size={20} strokeWidth={1.700} />
        <span className="ml-[12px]">Search</span>
        <Sloth />
      </div>
      <div className="ml-[2.500px] flex">
        {tasks.map(({ icon, active, idle, badge }, i) => (
          <div key={i} className={"relative mx-[3.5px] flex h-[50px] w-[48px] items-center justify-center rounded-[5px] " + (active ? "bg-[#363636]" : "")}>
            <Svg size={30} box={30}>{icon}</Svg>
            {badge && <span className={"absolute right-[4px] top-[4px] flex size-[18px] items-center justify-center rounded-full text-[11px] " + badge}>F</span>}
            {!idle && <span className={"absolute bottom-0 h-[3px] rounded-full " + (active ? "w-5 bg-[#f0a33a]" : "w-[8px] bg-[#9a9a9a]")} />}
          </div>
        ))}
      </div>
      <div className="ml-auto flex items-center pr-[25px]">
        <ChevronUp size={20} strokeWidth={1.700} />
        <span className="ml-[24px] w-[30px] text-[14px]">ENG</span>
        <Svg size={20} stroke="#fff" strokeWidth="1.900" className="ml-[22px]"><path d="M1.500 9a15 15 0 0 1 21 0M5 13a10 10 0 0 1 14 0M8.500 16.500a5 5 0 0 1 7 0" /><circle cx="12" cy="20" r="1.500" fill="#fff" /></Svg>
        <Svg size={20} stroke="#fff" strokeWidth="1.700" className="ml-[8px]"><path d="M2 9v6h4l6 5V4L6 9zM15.500 9c1.500 2 1.500 4 0 6" /><path d="M18.500 6c3 4 3 8 0 12M21 3.500c3.500 5 3.500 12 0 17" stroke="#777" /></Svg>
        <Svg size={22} stroke="#fff" strokeWidth="1.600" className="ml-[10px]"><rect x="4" y="7" width="17" height="11" rx="2.500" /><path d="M23 11v3" /><path d="M8.500 10h10v5.500h-8z" fill="#fff" /><path d="M2 3v3M6 3v3M.8 6h6.500v2.500c0 4-6.500 4-6.500 0zM4 12v6" fill="#1c1c1c" /></Svg>
        <div className="-mt-[2px] ml-[16px] w-[82px] whitespace-nowrap text-right leading-[20px]"><p>11.01</p><p>20/10/2023</p></div>
        <Svg size={20} className="ml-[8px]"><path d="M12 2c-5 0-7 3.500-7 8v4l-3 5h20l-3-5v-4c0-4.500-2-8-7-8z" fill="#f3b13c" /><path d="M9 20.500h6c-.5 2.500-5.500 2.500-6 0z" fill="#f3b13c" /></Svg>
      </div>
    </footer>
  );
}

export default function App() {
  return (
    <div className="flex h-[1080px] w-[1920px] flex-col overflow-hidden bg-[#3b3b3b] font-['Open_Sans',sans-serif]">
      <TabStrip />
      <Toolbar />
      <div className="flex h-[928px] shrink-0">
        <Dashboard />
        <Sidebar />
      </div>
      <Taskbar />
    </div>
  );
}
